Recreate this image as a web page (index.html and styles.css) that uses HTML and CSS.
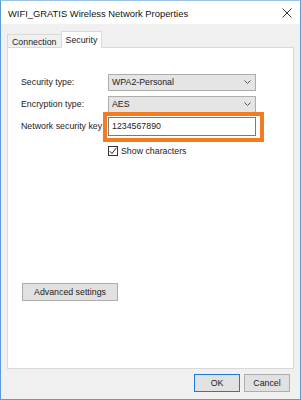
FILE: index.html
```html
<!DOCTYPE html>
<html lang="en">
<head>
  <meta charset="UTF-8">
  <title>WIFI_GRATIS Wireless Network Properties</title>
  <link rel="stylesheet" href="styles.css">
</head>
<body>
<div class="dialog">
  <div class="titlebar">
    <div class="caption">WIFI_GRATIS Wireless Network Properties</div>
    <div class="close">
      <svg width="10" height="10" viewBox="0 0 10 10">
        <path d="M0.5 0.5 L9.5 9.5 M9.5 0.5 L0.5 9.5" stroke="#333" stroke-width="1" fill="none"/>
      </svg>
    </div>
  </div>
  <div class="content">
    <div class="tabs">
      <div class="tab">Connection</div>
      <div class="tab active">Security</div>
    </div>
    <div class="panel">
      <div class="form">
        <label class="label">Security type:</label>
        <div class="select">
          <span>WPA2-Personal</span>
          <svg class="chevron" width="7" height="4" viewBox="0 0 7 4"><path d="M0.5 0.5 L3.5 3.5 L6.5 0.5" stroke="#555" fill="none"/></svg>
        </div>
        <label class="label">Encryption type:</label>
        <div class="select">
          <span>AES</span>
          <svg class="chevron" width="7" height="4" viewBox="0 0 7 4"><path d="M0.5 0.5 L3.5 3.5 L6.5 0.5" stroke="#555" fill="none"/></svg>
        </div>
        <label class="label">Network security key</label>
        <div class="key">
          <div class="input">1234567890</div>
          <div class="highlight"></div>
        </div>
        <div></div>
        <div class="check">
          <span class="box">
            <svg width="8" height="8" viewBox="0 0 8 8"><path d="M0.8 4.2 L3 6.6 L7.3 0.8" stroke="#222" fill="none"/></svg>
          </span>
          <span>Show characters</span>
        </div>
      </div>
      <div class="button advanced">Advanced settings</div>
    </div>
    <div class="footer">
      <div class="button default">OK</div>
      <div class="button">Cancel</div>
    </div>
  </div>
</div>
</body>
</html>
```

FILE: styles.css
```css
* {
    box-sizing: border-box;
}

html, body {
    width: 100%;
    height: 100%;
    margin: 0;
    padding: 0;
}

body {
    font-family: 'Liberation Sans', Arial, sans-serif;
    font-size: 8.8px;
    color: #222;
    background: #ffffff;
}

.dialog {
    width: 301px;
    height: 400px;
    display: flex;
    flex-direction: column;
    border: 1px solid #5d9bd6;
    border-top-color: #9cc3e8;
}

.titlebar {
    height: 23px;
    display: flex;
    align-items: center;
    justify-content: space-between;
    padding: 1px 8px 0 7px;
    background: #ffffff;
}

.titlebar .caption {
    font-size: 9.4px;
    color: #111;
}

.titlebar .close {
    display: flex;
}

.content {
    flex: 1 1 0;
    display: flex;
    flex-direction: column;
    padding: 0 6px;
    background: #f0f0f0;
}

.tabs {
    display: flex;
    align-items: flex-end;
    height: 24px;
    margin-bottom: -1px;
}

.tab {
    height: 14px;
    padding: 1px 4px 0;
    border: 1px solid #d9d9d9;
    border-bottom: none;
    background: #f0f0f0;
    line-height: 12px;
}

.tab.active {
    position: relative;
    height: 17px;
    margin-left: -1px;
    padding-top: 2px;
    background: #ffffff;
}

.panel {
    height: 322px;
    display: flex;
    flex-direction: column;
    padding: 25px 13px 0;
    border: 1px solid #d9d9d9;
    background: #ffffff;
}

.form {
    display: grid;
    grid-template-columns: 87px 148px;
    grid-auto-rows: 18px;
    row-gap: 4px;
    align-items: center;
}

.select {
    height: 17px;
    display: flex;
    align-items: center;
    justify-content: space-between;
    padding: 0 4px 0 3px;
    border: 1px solid #adadad;
    background: #e5e5e5;
}

.key {
    position: relative;
    height: 19px;
}

.input {
    height: 100%;
    display: flex;
    align-items: center;
    padding-left: 3px;
    border: 1px solid #7a7a7a;
    background: #ffffff;
}

.highlight {
    position: absolute;
    left: -5px;
    right: -8px;
    top: -5px;
    bottom: -6px;
    border: 4px solid #f47b20;
}

.check {
    display: flex;
    align-items: center;
    gap: 3px;
    margin-top: 6px;
}

.check .box {
    width: 10px;
    height: 10px;
    display: flex;
    align-items: center;
    justify-content: center;
    border: 1px solid #333;
    background: #ffffff;
}

.button {
    height: 18px;
    display: flex;
    align-items: center;
    justify-content: center;
    border: 1px solid #adadad;
    background: #e1e1e1;
}

.advanced {
    width: 96px;
    margin-top: 126px;
    margin-left: 1px;
}

.footer {
    display: flex;
    justify-content: flex-end;
    gap: 4px;
    padding: 5px 4px 0 0;
}

.footer .button {
    width: 46px;
}

.footer .button.default {
    border-color: #1c7ad4;
}
```
